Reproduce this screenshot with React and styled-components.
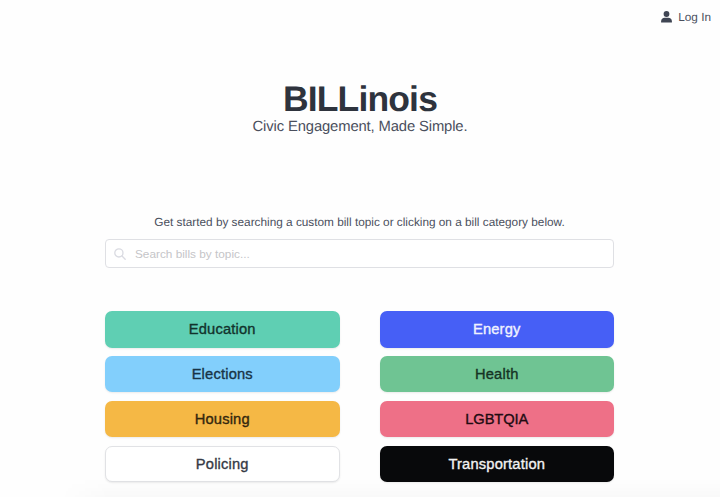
import React from "react";
import styled, { createGlobalStyle } from "styled-components";

const GlobalStyle = createGlobalStyle`
  * { box-sizing: border-box; }
  body {
    margin: 0;
    background: #fefefe;
    color: #4a4f5d;
    font-family: "Liberation Sans", Arial, sans-serif;
    overflow: hidden;
    text-rendering: geometricPrecision;
  }
`;

const Page = styled.div`
  display: flex;
  flex-direction: column;
  width: 720px;
  height: 497px;
  overflow: hidden;
`;

const TopBar = styled.header`
  display: flex;
  justify-content: flex-end;
  height: 34px;
  padding-right: 9px;
`;

const LoginLink = styled.a`
  display: flex;
  align-items: center;
  gap: 6px;
  font-size: 11.8px;
  color: #4a4f5d;
`;

const Hero = styled.section`
  height: 181px;
  padding-top: 46px;
  text-align: center;
`;

const Title = styled.h1`
  margin: 0;
  font-size: 35.5px;
  line-height: 38px;
  letter-spacing: -0.85px;
  font-weight: 700;
  color: #2e333d;
`;

const Subtitle = styled.p`
  margin: 0;
  font-size: 14.8px;
  line-height: 19px;
  letter-spacing: -0.13px;
`;

const Content = styled.main`
  width: 509px;
  margin-left: 105px;
`;

const Prompt = styled.p`
  margin: 0;
  font-size: 11.8px;
  line-height: 14px;
  text-align: center;
  white-space: nowrap;
`;

const SearchBox = styled.label`
  display: flex;
  align-items: center;
  gap: 9px;
  height: 29px;
  margin-top: 10px;
  padding-left: 8px;
  border: 1px solid #dfe0e4;
  border-radius: 4px;
  background: #fff;
`;

const SearchInput = styled.input`
  flex: 1;
  min-width: 0;
  padding: 0;
  border: 0;
  outline: 0;
  background: transparent;
  font: 11.8px "Liberation Sans", Arial, sans-serif;
  &::placeholder { color: #c5c5c8; opacity: 1; }
`;

const Categories = styled.div`
  display: grid;
  grid-template-columns: 234.5px 234.5px;
  justify-content: space-between;
  row-gap: 8.7px;
  margin-top: 43.4px;
`;

const Category = styled.button`
  height: 36.2px;
  padding: 0;
  border: ${(p) => (p.$outlined ? "1px solid #e1e2e5" : "0")};
  border-radius: 7px;
  background: ${(p) => p.$bg};
  color: ${(p) => p.$color};
  box-shadow: 0 1px 2px rgba(10, 10, 10, 0.08);
  font: 14.7px "Liberation Sans", Arial, sans-serif;
  letter-spacing: ${(p) => p.$spacing || "0.18px"};
  -webkit-text-stroke: 0.35px currentColor;
`;

const BottomShade = styled.div`
  flex: 1;
  margin: -4px 0 0 60px;
  background: linear-gradient(to bottom, transparent, rgba(0, 0, 0, 0.018));
  mask-image: linear-gradient(to right, transparent, #000 50px);
`;

const categories = [
  { name: "Education", bg: "#5fcfb3", color: "#12332c" },
  { name: "Energy", bg: "#465ff6", color: "#f0f2ff" },
  { name: "Elections", bg: "#82cffc", color: "#183447" },
  { name: "Health", bg: "#6fc493", color: "#153324" },
  { name: "Housing", bg: "#f5b845", color: "#33270e" },
  { name: "LGBTQIA", bg: "#ee7087", color: "#210b11", spacing: "-0.1px" },
  { name: "Policing", bg: "#fff", color: "#363a45", outlined: true },
  { name: "Transportation", bg: "#08090b", color: "#f2f2f2" },
];

function UserIcon() {
  return (
    <svg width="11" height="12" viewBox="0 0 11 12" fill="#3f4553" aria-hidden="true">
      <circle cx="5.5" cy="3" r="2.9" />
      <path d="M.1 11.5v-1.1C.1 8.2 1.6 6.8 3.7 6.8h3.6c2.1 0 3.6 1.4 3.6 3.6v1.1z" />
    </svg>
  );
}

function SearchIcon() {
  return (
    <svg width="12" height="12" viewBox="0 0 12 12" fill="none" stroke="#dadbe2" strokeWidth="1.3" strokeLinecap="round" aria-hidden="true">
      <circle cx="4.9" cy="4.9" r="4.1" />
      <path d="m8 8 3.2 3.2" />
    </svg>
  );
}

export default function App() {
  return (
    <>
      <GlobalStyle />
      <Page>
        <TopBar>
          <LoginLink>
            <UserIcon />
            Log In
          </LoginLink>
        </TopBar>
        <Hero>
          <Title>BILLinois</Title>
          <Subtitle>Civic Engagement, Made Simple.</Subtitle>
        </Hero>
        <Content>
          <Prompt>
            Get started by searching a custom bill topic or clicking on a bill category below.
          </Prompt>
          <SearchBox>
            <SearchIcon />
            <SearchInput type="text" placeholder="Search bills by topic..." />
          </SearchBox>
          <Categories>
            {categories.map((c) => (
              <Category
                key={c.name}
                $bg={c.bg}
                $color={c.color}
                $outlined={c.outlined}
                $spacing={c.spacing}
              >
                {c.name}
              </Category>
            ))}
          </Categories>
        </Content>
        <BottomShade />
      </Page>
    </>
  );
}
